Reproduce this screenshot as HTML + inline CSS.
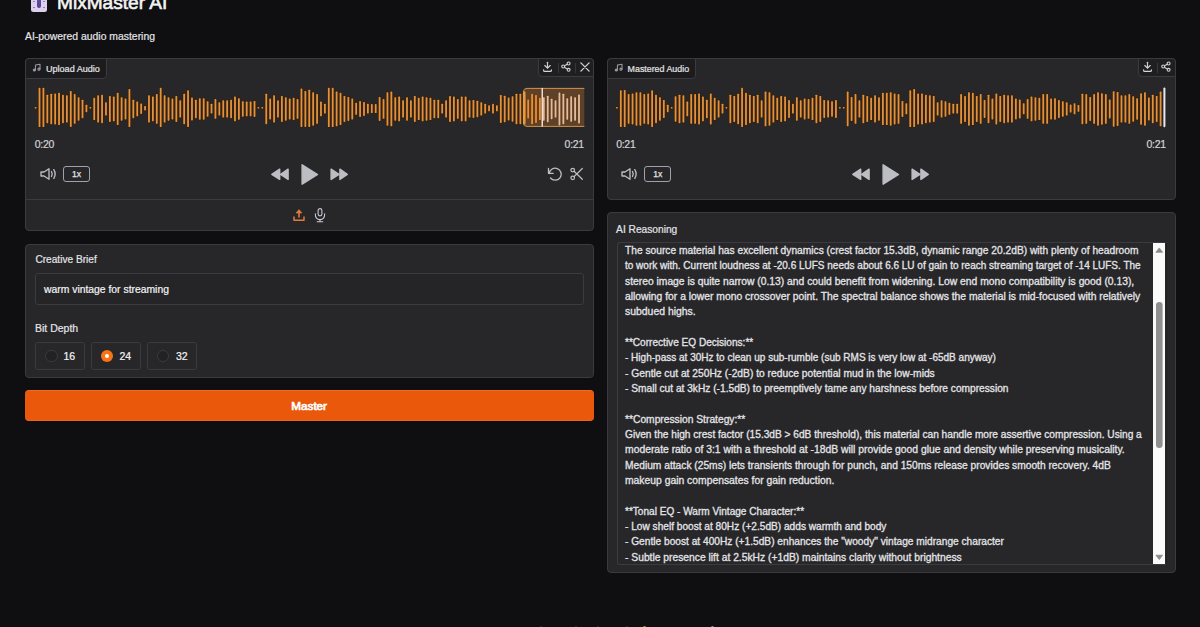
<!DOCTYPE html>
<html><head><meta charset="utf-8"><style>
html,body{margin:0;padding:0}
body{width:1200px;height:627px;background:#0f0f11;overflow:hidden;position:relative;font-family:"Liberation Sans",sans-serif;color:#e4e4e7;-webkit-text-stroke:0.2px currentColor}
.a{position:absolute}
.panel{position:absolute;background:#27272a;border:1px solid #3a3a40;border-radius:4px;box-sizing:border-box}
.lbl{position:absolute;left:-1px;top:-1px;height:20.8px;background:#1c1c1f;border:1px solid #3a3a40;border-radius:4px 0 4px 0;box-sizing:border-box}
.lbl span{position:absolute;top:4.8px;font-size:9.05px;line-height:10px;color:#e4e4e7;white-space:nowrap}
.tl{position:absolute;transform-origin:0 0;-webkit-text-stroke:0.3px #e4e4e7;left:625.4px;font-size:10.17px;line-height:12px;white-space:pre;color:#e4e4e7}
.t{position:absolute;white-space:nowrap;line-height:1}
</style></head><body>

<!-- header -->
<div class="a" style="left:31px;top:-5px;width:16px;height:16.7px;background:#dcd0ee;border-radius:2.5px"></div>
<div class="a" style="left:36.8px;top:-5px;width:3.8px;height:12.8px;background:linear-gradient(#5a5aa0,#5a3f9a);border-radius:0 0 2px 2px"></div>
<div class="a" style="left:33px;top:0.8px;width:2px;height:1px;background:#8d84a8"></div>
<div class="a" style="left:42.5px;top:0.8px;width:2px;height:1px;background:#8d84a8"></div>
<div class="a" style="left:33px;top:6.8px;width:2px;height:1px;background:#8d84a8"></div>
<div class="a" style="left:42.5px;top:6.8px;width:2px;height:1px;background:#8d84a8"></div>
<div class="t" style="left:57px;top:-6.9px;font-size:19.1px;font-weight:400;color:#f4f4f5;-webkit-text-stroke:0.6px #f4f4f5">MixMaster AI</div>
<div class="t" style="left:25px;top:32.3px;font-size:10.4px;color:#e4e4e7">AI-powered audio mastering</div>

<!-- upload panel -->
<div class="panel" style="left:25px;top:58px;width:569px;height:173px">
  <div class="lbl" style="width:82px"><span style="left:20px">Upload Audio</span></div>
  <div class="a" style="left:511.5px;top:-1px;width:56.5px;height:18.6px;background:#1f1f22;border:1px solid #3a3a40;border-radius:0 4px 0 4px;box-sizing:border-box"></div>
  <div class="a" style="left:531.6px;top:3.5px;width:1.2px;height:10px;background:#36363c"></div>
  <div class="a" style="left:549.3px;top:3.5px;width:1.2px;height:10px;background:#36363c"></div>
  <div class="a" style="left:-1px;top:140.3px;width:569px;height:1px;background:#3a3a40"></div>
</div>
<svg class="a" style="left:31.6px;top:63.3px" width="9.2" height="9.2" viewBox="0 0 24 24" fill="none" stroke="#9a9aa2" stroke-width="2.7" stroke-linecap="round" stroke-linejoin="round"><path d="M9 18V5l12-2v13"/><circle cx="6" cy="18" r="2.6" fill="#9a9aa2"/><circle cx="18" cy="16" r="2.6"/></svg>
<svg class="a" style="left:542px;top:61px" width="12" height="12" viewBox="0 0 12 12" fill="none" stroke="#d4d4d8" stroke-width="1.15" stroke-linecap="round" stroke-linejoin="round"><path d="M5.5 1.3V6.9"/><path d="M2.8 4.5L5.5 7.1L8.2 4.5"/><path d="M1.6 8.7V9.3A1 1 0 0 0 2.6 10.4H8.4A1 1 0 0 0 9.4 9.3V8.7"/></svg>
<svg class="a" style="left:560px;top:61px" width="12" height="12" viewBox="0 0 12 12" fill="none" stroke="#d4d4d8" stroke-width="1.1"><circle cx="8.6" cy="2.5" r="1.45"/><circle cx="3.2" cy="5.5" r="1.45"/><circle cx="8.6" cy="8.8" r="1.45"/><path d="M4.5 4.8L7.3 3.2M4.5 6.2L7.3 8.1"/></svg>
<svg class="a" style="left:580px;top:61.7px" width="10" height="10" viewBox="0 0 10 10" fill="none" stroke="#d4d4d8" stroke-width="1.3" stroke-linecap="round"><path d="M0.9 0.9L9.1 9.1M9.1 0.9L0.9 9.1"/></svg>

<!-- mastered panel -->
<div class="panel" style="left:606.6px;top:58px;width:569px;height:141.5px">
  <div class="lbl" style="width:89px"><span style="left:20px;font-size:8.85px">Mastered Audio</span></div>
  <div class="a" style="left:530.6px;top:-1px;width:38px;height:18.6px;background:#1f1f22;border:1px solid #3a3a40;border-radius:0 4px 0 4px;box-sizing:border-box"></div>
  <div class="a" style="left:549.4px;top:3.5px;width:1.2px;height:10px;background:#36363c"></div>
</div>
<svg class="a" style="left:613.6px;top:63.3px" width="9.2" height="9.2" viewBox="0 0 24 24" fill="none" stroke="#9a9aa2" stroke-width="2.7" stroke-linecap="round" stroke-linejoin="round"><path d="M9 18V5l12-2v13"/><circle cx="6" cy="18" r="2.6" fill="#9a9aa2"/><circle cx="18" cy="16" r="2.6"/></svg>
<svg class="a" style="left:1142px;top:61px" width="12" height="12" viewBox="0 0 12 12" fill="none" stroke="#d4d4d8" stroke-width="1.15" stroke-linecap="round" stroke-linejoin="round"><path d="M5.5 1.3V6.9"/><path d="M2.8 4.5L5.5 7.1L8.2 4.5"/><path d="M1.6 8.7V9.3A1 1 0 0 0 2.6 10.4H8.4A1 1 0 0 0 9.4 9.3V8.7"/></svg>
<svg class="a" style="left:1159.8px;top:61px" width="12" height="12" viewBox="0 0 12 12" fill="none" stroke="#d4d4d8" stroke-width="1.1"><circle cx="8.6" cy="2.5" r="1.45"/><circle cx="3.2" cy="5.5" r="1.45"/><circle cx="8.6" cy="8.8" r="1.45"/><path d="M4.5 4.8L7.3 3.2M4.5 6.2L7.3 8.1"/></svg>

<svg class="a" style="left:0;top:0" width="1200" height="140" viewBox="0 0 1200 140">
<rect x="34.70" y="107.00" width="1.8" height="1.60" rx="0.6" fill="#e3923c" stroke="#3a1f08" stroke-width="1.5" stroke-opacity="0.85" paint-order="stroke"/><rect x="38.61" y="87.85" width="1.8" height="39.25" rx="0.6" fill="#e3923c" stroke="#3a1f08" stroke-width="1.5" stroke-opacity="0.85" paint-order="stroke"/><rect x="42.52" y="87.85" width="1.8" height="39.25" rx="0.6" fill="#e3923c" stroke="#3a1f08" stroke-width="1.5" stroke-opacity="0.85" paint-order="stroke"/><rect x="46.43" y="94.72" width="1.8" height="28.45" rx="0.6" fill="#e3923c" stroke="#3a1f08" stroke-width="1.5" stroke-opacity="0.85" paint-order="stroke"/><rect x="50.34" y="93.72" width="1.8" height="30.45" rx="0.6" fill="#e3923c" stroke="#3a1f08" stroke-width="1.5" stroke-opacity="0.85" paint-order="stroke"/><rect x="54.25" y="93.47" width="1.8" height="30.95" rx="0.6" fill="#e3923c" stroke="#3a1f08" stroke-width="1.5" stroke-opacity="0.85" paint-order="stroke"/><rect x="58.16" y="92.85" width="1.8" height="32.20" rx="0.6" fill="#e3923c" stroke="#3a1f08" stroke-width="1.5" stroke-opacity="0.85" paint-order="stroke"/><rect x="62.07" y="94.72" width="1.8" height="28.45" rx="0.6" fill="#e3923c" stroke="#3a1f08" stroke-width="1.5" stroke-opacity="0.85" paint-order="stroke"/><rect x="65.97" y="95.35" width="1.8" height="27.20" rx="0.6" fill="#e3923c" stroke="#3a1f08" stroke-width="1.5" stroke-opacity="0.85" paint-order="stroke"/><rect x="69.88" y="90.97" width="1.8" height="35.95" rx="0.6" fill="#e3923c" stroke="#3a1f08" stroke-width="1.5" stroke-opacity="0.85" paint-order="stroke"/><rect x="73.79" y="94.10" width="1.8" height="29.70" rx="0.6" fill="#e3923c" stroke="#3a1f08" stroke-width="1.5" stroke-opacity="0.85" paint-order="stroke"/><rect x="77.70" y="97.22" width="1.8" height="23.45" rx="0.6" fill="#e3923c" stroke="#3a1f08" stroke-width="1.5" stroke-opacity="0.85" paint-order="stroke"/><rect x="81.61" y="99.72" width="1.8" height="18.45" rx="0.6" fill="#e3923c" stroke="#3a1f08" stroke-width="1.5" stroke-opacity="0.85" paint-order="stroke"/><rect x="85.52" y="104.72" width="1.8" height="7.44" rx="0.6" fill="#e3923c" stroke="#3a1f08" stroke-width="1.5" stroke-opacity="0.85" paint-order="stroke"/><rect x="89.43" y="107.00" width="1.8" height="1.60" rx="0.6" fill="#e3923c" stroke="#3a1f08" stroke-width="1.5" stroke-opacity="0.85" paint-order="stroke"/><rect x="93.34" y="97.85" width="1.8" height="22.20" rx="0.6" fill="#e3923c" stroke="#3a1f08" stroke-width="1.5" stroke-opacity="0.85" paint-order="stroke"/><rect x="97.25" y="95.35" width="1.8" height="27.20" rx="0.6" fill="#e3923c" stroke="#3a1f08" stroke-width="1.5" stroke-opacity="0.85" paint-order="stroke"/><rect x="101.16" y="94.72" width="1.8" height="28.45" rx="0.6" fill="#e3923c" stroke="#3a1f08" stroke-width="1.5" stroke-opacity="0.85" paint-order="stroke"/><rect x="105.07" y="102.22" width="1.8" height="13.40" rx="0.6" fill="#e3923c" stroke="#3a1f08" stroke-width="1.5" stroke-opacity="0.85" paint-order="stroke"/><rect x="108.98" y="95.97" width="1.8" height="25.95" rx="0.6" fill="#e3923c" stroke="#3a1f08" stroke-width="1.5" stroke-opacity="0.85" paint-order="stroke"/><rect x="112.89" y="96.60" width="1.8" height="24.70" rx="0.6" fill="#e3923c" stroke="#3a1f08" stroke-width="1.5" stroke-opacity="0.85" paint-order="stroke"/><rect x="116.80" y="92.85" width="1.8" height="32.20" rx="0.6" fill="#e3923c" stroke="#3a1f08" stroke-width="1.5" stroke-opacity="0.85" paint-order="stroke"/><rect x="120.71" y="97.22" width="1.8" height="23.45" rx="0.6" fill="#e3923c" stroke="#3a1f08" stroke-width="1.5" stroke-opacity="0.85" paint-order="stroke"/><rect x="124.62" y="98.47" width="1.8" height="20.95" rx="0.6" fill="#e3923c" stroke="#3a1f08" stroke-width="1.5" stroke-opacity="0.85" paint-order="stroke"/><rect x="128.52" y="89.10" width="1.8" height="38.00" rx="0.6" fill="#e3923c" stroke="#3a1f08" stroke-width="1.5" stroke-opacity="0.85" paint-order="stroke"/><rect x="132.43" y="99.72" width="1.8" height="18.45" rx="0.6" fill="#e3923c" stroke="#3a1f08" stroke-width="1.5" stroke-opacity="0.85" paint-order="stroke"/><rect x="136.34" y="101.60" width="1.8" height="14.70" rx="0.6" fill="#e3923c" stroke="#3a1f08" stroke-width="1.5" stroke-opacity="0.85" paint-order="stroke"/><rect x="140.25" y="103.47" width="1.8" height="10.42" rx="0.6" fill="#e3923c" stroke="#3a1f08" stroke-width="1.5" stroke-opacity="0.85" paint-order="stroke"/><rect x="144.16" y="105.97" width="1.8" height="4.46" rx="0.6" fill="#e3923c" stroke="#3a1f08" stroke-width="1.5" stroke-opacity="0.85" paint-order="stroke"/><rect x="148.07" y="95.35" width="1.8" height="27.20" rx="0.6" fill="#e3923c" stroke="#3a1f08" stroke-width="1.5" stroke-opacity="0.85" paint-order="stroke"/><rect x="151.98" y="96.60" width="1.8" height="24.70" rx="0.6" fill="#e3923c" stroke="#3a1f08" stroke-width="1.5" stroke-opacity="0.85" paint-order="stroke"/><rect x="155.89" y="94.10" width="1.8" height="29.70" rx="0.6" fill="#e3923c" stroke="#3a1f08" stroke-width="1.5" stroke-opacity="0.85" paint-order="stroke"/><rect x="159.80" y="87.85" width="1.8" height="39.25" rx="0.6" fill="#e3923c" stroke="#3a1f08" stroke-width="1.5" stroke-opacity="0.85" paint-order="stroke"/><rect x="163.71" y="95.35" width="1.8" height="27.20" rx="0.6" fill="#e3923c" stroke="#3a1f08" stroke-width="1.5" stroke-opacity="0.85" paint-order="stroke"/><rect x="167.62" y="97.22" width="1.8" height="23.45" rx="0.6" fill="#e3923c" stroke="#3a1f08" stroke-width="1.5" stroke-opacity="0.85" paint-order="stroke"/><rect x="171.53" y="98.47" width="1.8" height="20.95" rx="0.6" fill="#e3923c" stroke="#3a1f08" stroke-width="1.5" stroke-opacity="0.85" paint-order="stroke"/><rect x="175.44" y="95.97" width="1.8" height="25.95" rx="0.6" fill="#e3923c" stroke="#3a1f08" stroke-width="1.5" stroke-opacity="0.85" paint-order="stroke"/><rect x="179.35" y="100.35" width="1.8" height="17.20" rx="0.6" fill="#e3923c" stroke="#3a1f08" stroke-width="1.5" stroke-opacity="0.85" paint-order="stroke"/><rect x="183.26" y="93.72" width="1.8" height="30.45" rx="0.6" fill="#e3923c" stroke="#3a1f08" stroke-width="1.5" stroke-opacity="0.85" paint-order="stroke"/><rect x="187.16" y="90.35" width="1.8" height="36.75" rx="0.6" fill="#e3923c" stroke="#3a1f08" stroke-width="1.5" stroke-opacity="0.85" paint-order="stroke"/><rect x="191.07" y="97.47" width="1.8" height="22.95" rx="0.6" fill="#e3923c" stroke="#3a1f08" stroke-width="1.5" stroke-opacity="0.85" paint-order="stroke"/><rect x="194.98" y="99.72" width="1.8" height="18.45" rx="0.6" fill="#e3923c" stroke="#3a1f08" stroke-width="1.5" stroke-opacity="0.85" paint-order="stroke"/><rect x="198.89" y="98.22" width="1.8" height="21.45" rx="0.6" fill="#e3923c" stroke="#3a1f08" stroke-width="1.5" stroke-opacity="0.85" paint-order="stroke"/><rect x="202.80" y="98.22" width="1.8" height="21.45" rx="0.6" fill="#e3923c" stroke="#3a1f08" stroke-width="1.5" stroke-opacity="0.85" paint-order="stroke"/><rect x="206.71" y="101.22" width="1.8" height="15.45" rx="0.6" fill="#e3923c" stroke="#3a1f08" stroke-width="1.5" stroke-opacity="0.85" paint-order="stroke"/><rect x="210.62" y="103.72" width="1.8" height="9.83" rx="0.6" fill="#e3923c" stroke="#3a1f08" stroke-width="1.5" stroke-opacity="0.85" paint-order="stroke"/><rect x="214.53" y="99.10" width="1.8" height="19.70" rx="0.6" fill="#e3923c" stroke="#3a1f08" stroke-width="1.5" stroke-opacity="0.85" paint-order="stroke"/><rect x="218.44" y="102.22" width="1.8" height="13.40" rx="0.6" fill="#e3923c" stroke="#3a1f08" stroke-width="1.5" stroke-opacity="0.85" paint-order="stroke"/><rect x="222.35" y="100.35" width="1.8" height="17.20" rx="0.6" fill="#e3923c" stroke="#3a1f08" stroke-width="1.5" stroke-opacity="0.85" paint-order="stroke"/><rect x="226.26" y="100.35" width="1.8" height="17.20" rx="0.6" fill="#e3923c" stroke="#3a1f08" stroke-width="1.5" stroke-opacity="0.85" paint-order="stroke"/><rect x="230.17" y="99.72" width="1.8" height="18.45" rx="0.6" fill="#e3923c" stroke="#3a1f08" stroke-width="1.5" stroke-opacity="0.85" paint-order="stroke"/><rect x="234.08" y="96.60" width="1.8" height="24.70" rx="0.6" fill="#e3923c" stroke="#3a1f08" stroke-width="1.5" stroke-opacity="0.85" paint-order="stroke"/><rect x="237.99" y="98.22" width="1.8" height="21.45" rx="0.6" fill="#e3923c" stroke="#3a1f08" stroke-width="1.5" stroke-opacity="0.85" paint-order="stroke"/><rect x="241.90" y="101.22" width="1.8" height="15.45" rx="0.6" fill="#e3923c" stroke="#3a1f08" stroke-width="1.5" stroke-opacity="0.85" paint-order="stroke"/><rect x="245.81" y="101.60" width="1.8" height="14.70" rx="0.6" fill="#e3923c" stroke="#3a1f08" stroke-width="1.5" stroke-opacity="0.85" paint-order="stroke"/><rect x="249.71" y="101.60" width="1.8" height="14.70" rx="0.6" fill="#e3923c" stroke="#3a1f08" stroke-width="1.5" stroke-opacity="0.85" paint-order="stroke"/><rect x="253.62" y="100.97" width="1.8" height="15.95" rx="0.6" fill="#e3923c" stroke="#3a1f08" stroke-width="1.5" stroke-opacity="0.85" paint-order="stroke"/><rect x="257.53" y="107.00" width="1.8" height="1.60" rx="0.6" fill="#e3923c" stroke="#3a1f08" stroke-width="1.5" stroke-opacity="0.85" paint-order="stroke"/><rect x="261.44" y="107.00" width="1.8" height="1.60" rx="0.6" fill="#e3923c" stroke="#3a1f08" stroke-width="1.5" stroke-opacity="0.85" paint-order="stroke"/><rect x="265.35" y="93.72" width="1.8" height="30.45" rx="0.6" fill="#e3923c" stroke="#3a1f08" stroke-width="1.5" stroke-opacity="0.85" paint-order="stroke"/><rect x="269.26" y="98.47" width="1.8" height="20.95" rx="0.6" fill="#e3923c" stroke="#3a1f08" stroke-width="1.5" stroke-opacity="0.85" paint-order="stroke"/><rect x="273.17" y="95.35" width="1.8" height="27.20" rx="0.6" fill="#e3923c" stroke="#3a1f08" stroke-width="1.5" stroke-opacity="0.85" paint-order="stroke"/><rect x="277.08" y="100.35" width="1.8" height="17.20" rx="0.6" fill="#e3923c" stroke="#3a1f08" stroke-width="1.5" stroke-opacity="0.85" paint-order="stroke"/><rect x="280.99" y="95.97" width="1.8" height="25.95" rx="0.6" fill="#e3923c" stroke="#3a1f08" stroke-width="1.5" stroke-opacity="0.85" paint-order="stroke"/><rect x="284.90" y="97.22" width="1.8" height="23.45" rx="0.6" fill="#e3923c" stroke="#3a1f08" stroke-width="1.5" stroke-opacity="0.85" paint-order="stroke"/><rect x="288.81" y="98.47" width="1.8" height="20.95" rx="0.6" fill="#e3923c" stroke="#3a1f08" stroke-width="1.5" stroke-opacity="0.85" paint-order="stroke"/><rect x="292.72" y="97.85" width="1.8" height="22.20" rx="0.6" fill="#e3923c" stroke="#3a1f08" stroke-width="1.5" stroke-opacity="0.85" paint-order="stroke"/><rect x="296.63" y="99.10" width="1.8" height="19.70" rx="0.6" fill="#e3923c" stroke="#3a1f08" stroke-width="1.5" stroke-opacity="0.85" paint-order="stroke"/><rect x="300.54" y="88.47" width="1.8" height="38.63" rx="0.6" fill="#e3923c" stroke="#3a1f08" stroke-width="1.5" stroke-opacity="0.85" paint-order="stroke"/><rect x="304.45" y="90.97" width="1.8" height="35.95" rx="0.6" fill="#e3923c" stroke="#3a1f08" stroke-width="1.5" stroke-opacity="0.85" paint-order="stroke"/><rect x="308.35" y="89.72" width="1.8" height="37.38" rx="0.6" fill="#e3923c" stroke="#3a1f08" stroke-width="1.5" stroke-opacity="0.85" paint-order="stroke"/><rect x="312.26" y="92.22" width="1.8" height="33.45" rx="0.6" fill="#e3923c" stroke="#3a1f08" stroke-width="1.5" stroke-opacity="0.85" paint-order="stroke"/><rect x="316.17" y="94.10" width="1.8" height="29.70" rx="0.6" fill="#e3923c" stroke="#3a1f08" stroke-width="1.5" stroke-opacity="0.85" paint-order="stroke"/><rect x="320.08" y="101.60" width="1.8" height="14.70" rx="0.6" fill="#e3923c" stroke="#3a1f08" stroke-width="1.5" stroke-opacity="0.85" paint-order="stroke"/><rect x="323.99" y="103.72" width="1.8" height="9.83" rx="0.6" fill="#e3923c" stroke="#3a1f08" stroke-width="1.5" stroke-opacity="0.85" paint-order="stroke"/><rect x="327.90" y="87.85" width="1.8" height="39.25" rx="0.6" fill="#e3923c" stroke="#3a1f08" stroke-width="1.5" stroke-opacity="0.85" paint-order="stroke"/><rect x="331.81" y="87.85" width="1.8" height="39.25" rx="0.6" fill="#e3923c" stroke="#3a1f08" stroke-width="1.5" stroke-opacity="0.85" paint-order="stroke"/><rect x="335.72" y="91.60" width="1.8" height="34.70" rx="0.6" fill="#e3923c" stroke="#3a1f08" stroke-width="1.5" stroke-opacity="0.85" paint-order="stroke"/><rect x="339.63" y="92.85" width="1.8" height="32.20" rx="0.6" fill="#e3923c" stroke="#3a1f08" stroke-width="1.5" stroke-opacity="0.85" paint-order="stroke"/><rect x="343.54" y="95.97" width="1.8" height="25.95" rx="0.6" fill="#e3923c" stroke="#3a1f08" stroke-width="1.5" stroke-opacity="0.85" paint-order="stroke"/><rect x="347.45" y="96.97" width="1.8" height="23.95" rx="0.6" fill="#e3923c" stroke="#3a1f08" stroke-width="1.5" stroke-opacity="0.85" paint-order="stroke"/><rect x="351.36" y="98.47" width="1.8" height="20.95" rx="0.6" fill="#e3923c" stroke="#3a1f08" stroke-width="1.5" stroke-opacity="0.85" paint-order="stroke"/><rect x="355.27" y="102.85" width="1.8" height="11.91" rx="0.6" fill="#e3923c" stroke="#3a1f08" stroke-width="1.5" stroke-opacity="0.85" paint-order="stroke"/><rect x="359.18" y="100.97" width="1.8" height="15.95" rx="0.6" fill="#e3923c" stroke="#3a1f08" stroke-width="1.5" stroke-opacity="0.85" paint-order="stroke"/><rect x="363.09" y="101.97" width="1.8" height="13.95" rx="0.6" fill="#e3923c" stroke="#3a1f08" stroke-width="1.5" stroke-opacity="0.85" paint-order="stroke"/><rect x="366.99" y="103.72" width="1.8" height="9.83" rx="0.6" fill="#e3923c" stroke="#3a1f08" stroke-width="1.5" stroke-opacity="0.85" paint-order="stroke"/><rect x="370.90" y="104.10" width="1.8" height="8.93" rx="0.6" fill="#e3923c" stroke="#3a1f08" stroke-width="1.5" stroke-opacity="0.85" paint-order="stroke"/><rect x="374.81" y="104.10" width="1.8" height="8.93" rx="0.6" fill="#e3923c" stroke="#3a1f08" stroke-width="1.5" stroke-opacity="0.85" paint-order="stroke"/><rect x="378.72" y="96.97" width="1.8" height="23.95" rx="0.6" fill="#e3923c" stroke="#3a1f08" stroke-width="1.5" stroke-opacity="0.85" paint-order="stroke"/><rect x="382.63" y="99.10" width="1.8" height="19.70" rx="0.6" fill="#e3923c" stroke="#3a1f08" stroke-width="1.5" stroke-opacity="0.85" paint-order="stroke"/><rect x="386.54" y="92.22" width="1.8" height="33.45" rx="0.6" fill="#e3923c" stroke="#3a1f08" stroke-width="1.5" stroke-opacity="0.85" paint-order="stroke"/><rect x="390.45" y="91.60" width="1.8" height="34.70" rx="0.6" fill="#e3923c" stroke="#3a1f08" stroke-width="1.5" stroke-opacity="0.85" paint-order="stroke"/><rect x="394.36" y="97.22" width="1.8" height="23.45" rx="0.6" fill="#e3923c" stroke="#3a1f08" stroke-width="1.5" stroke-opacity="0.85" paint-order="stroke"/><rect x="398.27" y="96.60" width="1.8" height="24.70" rx="0.6" fill="#e3923c" stroke="#3a1f08" stroke-width="1.5" stroke-opacity="0.85" paint-order="stroke"/><rect x="402.18" y="100.35" width="1.8" height="17.20" rx="0.6" fill="#e3923c" stroke="#3a1f08" stroke-width="1.5" stroke-opacity="0.85" paint-order="stroke"/><rect x="406.09" y="97.22" width="1.8" height="23.45" rx="0.6" fill="#e3923c" stroke="#3a1f08" stroke-width="1.5" stroke-opacity="0.85" paint-order="stroke"/><rect x="410.00" y="100.35" width="1.8" height="17.20" rx="0.6" fill="#e3923c" stroke="#3a1f08" stroke-width="1.5" stroke-opacity="0.85" paint-order="stroke"/><rect x="413.91" y="95.97" width="1.8" height="25.95" rx="0.6" fill="#e3923c" stroke="#3a1f08" stroke-width="1.5" stroke-opacity="0.85" paint-order="stroke"/><rect x="417.82" y="97.85" width="1.8" height="22.20" rx="0.6" fill="#e3923c" stroke="#3a1f08" stroke-width="1.5" stroke-opacity="0.85" paint-order="stroke"/><rect x="421.73" y="96.60" width="1.8" height="24.70" rx="0.6" fill="#e3923c" stroke="#3a1f08" stroke-width="1.5" stroke-opacity="0.85" paint-order="stroke"/><rect x="425.64" y="97.22" width="1.8" height="23.45" rx="0.6" fill="#e3923c" stroke="#3a1f08" stroke-width="1.5" stroke-opacity="0.85" paint-order="stroke"/><rect x="429.54" y="97.85" width="1.8" height="22.20" rx="0.6" fill="#e3923c" stroke="#3a1f08" stroke-width="1.5" stroke-opacity="0.85" paint-order="stroke"/><rect x="433.45" y="99.72" width="1.8" height="18.45" rx="0.6" fill="#e3923c" stroke="#3a1f08" stroke-width="1.5" stroke-opacity="0.85" paint-order="stroke"/><rect x="437.36" y="99.72" width="1.8" height="18.45" rx="0.6" fill="#e3923c" stroke="#3a1f08" stroke-width="1.5" stroke-opacity="0.85" paint-order="stroke"/><rect x="441.27" y="103.72" width="1.8" height="9.83" rx="0.6" fill="#e3923c" stroke="#3a1f08" stroke-width="1.5" stroke-opacity="0.85" paint-order="stroke"/><rect x="445.18" y="100.35" width="1.8" height="17.20" rx="0.6" fill="#e3923c" stroke="#3a1f08" stroke-width="1.5" stroke-opacity="0.85" paint-order="stroke"/><rect x="449.09" y="95.97" width="1.8" height="25.95" rx="0.6" fill="#e3923c" stroke="#3a1f08" stroke-width="1.5" stroke-opacity="0.85" paint-order="stroke"/><rect x="453.00" y="96.60" width="1.8" height="24.70" rx="0.6" fill="#e3923c" stroke="#3a1f08" stroke-width="1.5" stroke-opacity="0.85" paint-order="stroke"/><rect x="456.91" y="99.10" width="1.8" height="19.70" rx="0.6" fill="#e3923c" stroke="#3a1f08" stroke-width="1.5" stroke-opacity="0.85" paint-order="stroke"/><rect x="460.82" y="96.60" width="1.8" height="24.70" rx="0.6" fill="#e3923c" stroke="#3a1f08" stroke-width="1.5" stroke-opacity="0.85" paint-order="stroke"/><rect x="464.73" y="96.60" width="1.8" height="24.70" rx="0.6" fill="#e3923c" stroke="#3a1f08" stroke-width="1.5" stroke-opacity="0.85" paint-order="stroke"/><rect x="468.64" y="100.35" width="1.8" height="17.20" rx="0.6" fill="#e3923c" stroke="#3a1f08" stroke-width="1.5" stroke-opacity="0.85" paint-order="stroke"/><rect x="472.55" y="99.97" width="1.8" height="17.95" rx="0.6" fill="#e3923c" stroke="#3a1f08" stroke-width="1.5" stroke-opacity="0.85" paint-order="stroke"/><rect x="476.46" y="100.72" width="1.8" height="16.45" rx="0.6" fill="#e3923c" stroke="#3a1f08" stroke-width="1.5" stroke-opacity="0.85" paint-order="stroke"/><rect x="480.37" y="102.22" width="1.8" height="13.40" rx="0.6" fill="#e3923c" stroke="#3a1f08" stroke-width="1.5" stroke-opacity="0.85" paint-order="stroke"/><rect x="484.28" y="103.72" width="1.8" height="9.83" rx="0.6" fill="#e3923c" stroke="#3a1f08" stroke-width="1.5" stroke-opacity="0.85" paint-order="stroke"/><rect x="488.18" y="105.35" width="1.8" height="5.95" rx="0.6" fill="#e3923c" stroke="#3a1f08" stroke-width="1.5" stroke-opacity="0.85" paint-order="stroke"/><rect x="492.09" y="103.72" width="1.8" height="9.83" rx="0.6" fill="#e3923c" stroke="#3a1f08" stroke-width="1.5" stroke-opacity="0.85" paint-order="stroke"/><rect x="496.00" y="105.35" width="1.8" height="5.95" rx="0.6" fill="#e3923c" stroke="#3a1f08" stroke-width="1.5" stroke-opacity="0.85" paint-order="stroke"/><rect x="499.91" y="94.97" width="1.8" height="27.95" rx="0.6" fill="#e3923c" stroke="#3a1f08" stroke-width="1.5" stroke-opacity="0.85" paint-order="stroke"/><rect x="503.82" y="95.72" width="1.8" height="26.45" rx="0.6" fill="#e3923c" stroke="#3a1f08" stroke-width="1.5" stroke-opacity="0.85" paint-order="stroke"/><rect x="507.73" y="97.47" width="1.8" height="22.95" rx="0.6" fill="#e3923c" stroke="#3a1f08" stroke-width="1.5" stroke-opacity="0.85" paint-order="stroke"/><rect x="511.64" y="96.22" width="1.8" height="25.45" rx="0.6" fill="#e3923c" stroke="#3a1f08" stroke-width="1.5" stroke-opacity="0.85" paint-order="stroke"/><rect x="515.55" y="93.72" width="1.8" height="30.45" rx="0.6" fill="#e3923c" stroke="#3a1f08" stroke-width="1.5" stroke-opacity="0.85" paint-order="stroke"/><rect x="519.46" y="93.72" width="1.8" height="30.45" rx="0.6" fill="#e3923c" stroke="#3a1f08" stroke-width="1.5" stroke-opacity="0.85" paint-order="stroke"/><rect x="523.37" y="94.72" width="1.8" height="28.45" rx="0.6" fill="#e3923c" stroke="#3a1f08" stroke-width="1.5" stroke-opacity="0.85" paint-order="stroke"/><rect x="527.28" y="99.47" width="1.8" height="18.95" rx="0.6" fill="#e3923c" stroke="#3a1f08" stroke-width="1.5" stroke-opacity="0.85" paint-order="stroke"/><rect x="531.19" y="93.72" width="1.8" height="30.45" rx="0.6" fill="#e3923c" stroke="#3a1f08" stroke-width="1.5" stroke-opacity="0.85" paint-order="stroke"/><rect x="535.10" y="94.97" width="1.8" height="27.95" rx="0.6" fill="#e3923c" stroke="#3a1f08" stroke-width="1.5" stroke-opacity="0.85" paint-order="stroke"/><rect x="539.01" y="97.85" width="1.8" height="22.20" rx="0.6" fill="#e3923c" stroke="#3a1f08" stroke-width="1.5" stroke-opacity="0.85" paint-order="stroke"/><rect x="542.92" y="97.22" width="1.8" height="23.45" rx="0.6" fill="#d6d2d2" stroke="#3a1f08" stroke-width="1.5" stroke-opacity="0.85" paint-order="stroke"/><rect x="546.83" y="95.72" width="1.8" height="26.45" rx="0.6" fill="#d6d2d2" stroke="#3a1f08" stroke-width="1.5" stroke-opacity="0.85" paint-order="stroke"/><rect x="550.73" y="98.72" width="1.8" height="20.45" rx="0.6" fill="#d6d2d2" stroke="#3a1f08" stroke-width="1.5" stroke-opacity="0.85" paint-order="stroke"/><rect x="554.64" y="100.35" width="1.8" height="17.20" rx="0.6" fill="#d6d2d2" stroke="#3a1f08" stroke-width="1.5" stroke-opacity="0.85" paint-order="stroke"/><rect x="558.55" y="92.47" width="1.8" height="32.95" rx="0.6" fill="#d6d2d2" stroke="#3a1f08" stroke-width="1.5" stroke-opacity="0.85" paint-order="stroke"/><rect x="562.46" y="93.72" width="1.8" height="30.45" rx="0.6" fill="#d6d2d2" stroke="#3a1f08" stroke-width="1.5" stroke-opacity="0.85" paint-order="stroke"/><rect x="566.37" y="98.22" width="1.8" height="21.45" rx="0.6" fill="#d6d2d2" stroke="#3a1f08" stroke-width="1.5" stroke-opacity="0.85" paint-order="stroke"/><rect x="570.28" y="96.22" width="1.8" height="25.45" rx="0.6" fill="#d6d2d2" stroke="#3a1f08" stroke-width="1.5" stroke-opacity="0.85" paint-order="stroke"/><rect x="574.19" y="97.22" width="1.8" height="23.45" rx="0.6" fill="#d6d2d2" stroke="#3a1f08" stroke-width="1.5" stroke-opacity="0.85" paint-order="stroke"/><rect x="578.10" y="94.47" width="1.8" height="28.95" rx="0.6" fill="#d6d2d2" stroke="#3a1f08" stroke-width="1.5" stroke-opacity="0.85" paint-order="stroke"/>
<rect x="525" y="87.9" width="59.3" height="38.6" fill="rgba(240,135,45,0.27)"/>
<path d="M584.3 88.4H527A3.6 3.6 0 0 0 523.4 92V122.8A3.6 3.6 0 0 0 527 126.4H584.3" fill="none" stroke="#d09048" stroke-width="1"/>
<rect x="523" y="91.3" width="2.5" height="33.3" rx="1.2" fill="#e99a3a"/>
<rect x="541.5" y="87.9" width="1.5" height="38.8" fill="#f0dcc8"/>
<rect x="616.00" y="107.00" width="1.8" height="1.60" rx="0.6" fill="#e3923c" stroke="#3a1f08" stroke-width="1.5" stroke-opacity="0.85" paint-order="stroke"/><rect x="619.91" y="90.35" width="1.8" height="36.75" rx="0.6" fill="#e3923c" stroke="#3a1f08" stroke-width="1.5" stroke-opacity="0.85" paint-order="stroke"/><rect x="623.82" y="89.97" width="1.8" height="37.13" rx="0.6" fill="#e3923c" stroke="#3a1f08" stroke-width="1.5" stroke-opacity="0.85" paint-order="stroke"/><rect x="627.73" y="94.10" width="1.8" height="29.70" rx="0.6" fill="#e3923c" stroke="#3a1f08" stroke-width="1.5" stroke-opacity="0.85" paint-order="stroke"/><rect x="631.65" y="93.47" width="1.8" height="30.95" rx="0.6" fill="#e3923c" stroke="#3a1f08" stroke-width="1.5" stroke-opacity="0.85" paint-order="stroke"/><rect x="635.56" y="92.22" width="1.8" height="33.45" rx="0.6" fill="#e3923c" stroke="#3a1f08" stroke-width="1.5" stroke-opacity="0.85" paint-order="stroke"/><rect x="639.47" y="92.22" width="1.8" height="33.45" rx="0.6" fill="#e3923c" stroke="#3a1f08" stroke-width="1.5" stroke-opacity="0.85" paint-order="stroke"/><rect x="643.38" y="94.10" width="1.8" height="29.70" rx="0.6" fill="#e3923c" stroke="#3a1f08" stroke-width="1.5" stroke-opacity="0.85" paint-order="stroke"/><rect x="647.29" y="93.47" width="1.8" height="30.95" rx="0.6" fill="#e3923c" stroke="#3a1f08" stroke-width="1.5" stroke-opacity="0.85" paint-order="stroke"/><rect x="651.20" y="90.35" width="1.8" height="36.75" rx="0.6" fill="#e3923c" stroke="#3a1f08" stroke-width="1.5" stroke-opacity="0.85" paint-order="stroke"/><rect x="655.12" y="94.72" width="1.8" height="28.45" rx="0.6" fill="#e3923c" stroke="#3a1f08" stroke-width="1.5" stroke-opacity="0.85" paint-order="stroke"/><rect x="659.03" y="97.22" width="1.8" height="23.45" rx="0.6" fill="#e3923c" stroke="#3a1f08" stroke-width="1.5" stroke-opacity="0.85" paint-order="stroke"/><rect x="662.94" y="99.97" width="1.8" height="17.95" rx="0.6" fill="#e3923c" stroke="#3a1f08" stroke-width="1.5" stroke-opacity="0.85" paint-order="stroke"/><rect x="666.85" y="104.72" width="1.8" height="7.44" rx="0.6" fill="#e3923c" stroke="#3a1f08" stroke-width="1.5" stroke-opacity="0.85" paint-order="stroke"/><rect x="670.76" y="107.00" width="1.8" height="1.60" rx="0.6" fill="#e3923c" stroke="#3a1f08" stroke-width="1.5" stroke-opacity="0.85" paint-order="stroke"/><rect x="674.67" y="96.22" width="1.8" height="25.45" rx="0.6" fill="#e3923c" stroke="#3a1f08" stroke-width="1.5" stroke-opacity="0.85" paint-order="stroke"/><rect x="678.58" y="94.72" width="1.8" height="28.45" rx="0.6" fill="#e3923c" stroke="#3a1f08" stroke-width="1.5" stroke-opacity="0.85" paint-order="stroke"/><rect x="682.50" y="95.35" width="1.8" height="27.20" rx="0.6" fill="#e3923c" stroke="#3a1f08" stroke-width="1.5" stroke-opacity="0.85" paint-order="stroke"/><rect x="686.41" y="101.60" width="1.8" height="14.70" rx="0.6" fill="#e3923c" stroke="#3a1f08" stroke-width="1.5" stroke-opacity="0.85" paint-order="stroke"/><rect x="690.32" y="94.10" width="1.8" height="29.70" rx="0.6" fill="#e3923c" stroke="#3a1f08" stroke-width="1.5" stroke-opacity="0.85" paint-order="stroke"/><rect x="694.23" y="94.10" width="1.8" height="29.70" rx="0.6" fill="#e3923c" stroke="#3a1f08" stroke-width="1.5" stroke-opacity="0.85" paint-order="stroke"/><rect x="698.14" y="93.47" width="1.8" height="30.95" rx="0.6" fill="#e3923c" stroke="#3a1f08" stroke-width="1.5" stroke-opacity="0.85" paint-order="stroke"/><rect x="702.05" y="96.60" width="1.8" height="24.70" rx="0.6" fill="#e3923c" stroke="#3a1f08" stroke-width="1.5" stroke-opacity="0.85" paint-order="stroke"/><rect x="705.96" y="99.72" width="1.8" height="18.45" rx="0.6" fill="#e3923c" stroke="#3a1f08" stroke-width="1.5" stroke-opacity="0.85" paint-order="stroke"/><rect x="709.88" y="93.47" width="1.8" height="30.95" rx="0.6" fill="#e3923c" stroke="#3a1f08" stroke-width="1.5" stroke-opacity="0.85" paint-order="stroke"/><rect x="713.79" y="97.85" width="1.8" height="22.20" rx="0.6" fill="#e3923c" stroke="#3a1f08" stroke-width="1.5" stroke-opacity="0.85" paint-order="stroke"/><rect x="717.70" y="100.35" width="1.8" height="17.20" rx="0.6" fill="#e3923c" stroke="#3a1f08" stroke-width="1.5" stroke-opacity="0.85" paint-order="stroke"/><rect x="721.61" y="103.72" width="1.8" height="9.83" rx="0.6" fill="#e3923c" stroke="#3a1f08" stroke-width="1.5" stroke-opacity="0.85" paint-order="stroke"/><rect x="725.52" y="107.00" width="1.8" height="1.60" rx="0.6" fill="#e3923c" stroke="#3a1f08" stroke-width="1.5" stroke-opacity="0.85" paint-order="stroke"/><rect x="729.43" y="94.72" width="1.8" height="28.45" rx="0.6" fill="#e3923c" stroke="#3a1f08" stroke-width="1.5" stroke-opacity="0.85" paint-order="stroke"/><rect x="733.35" y="95.97" width="1.8" height="25.95" rx="0.6" fill="#e3923c" stroke="#3a1f08" stroke-width="1.5" stroke-opacity="0.85" paint-order="stroke"/><rect x="737.26" y="93.72" width="1.8" height="30.45" rx="0.6" fill="#e3923c" stroke="#3a1f08" stroke-width="1.5" stroke-opacity="0.85" paint-order="stroke"/><rect x="741.17" y="87.85" width="1.8" height="39.25" rx="0.6" fill="#e3923c" stroke="#3a1f08" stroke-width="1.5" stroke-opacity="0.85" paint-order="stroke"/><rect x="745.08" y="92.85" width="1.8" height="32.20" rx="0.6" fill="#e3923c" stroke="#3a1f08" stroke-width="1.5" stroke-opacity="0.85" paint-order="stroke"/><rect x="748.99" y="94.72" width="1.8" height="28.45" rx="0.6" fill="#e3923c" stroke="#3a1f08" stroke-width="1.5" stroke-opacity="0.85" paint-order="stroke"/><rect x="752.90" y="95.97" width="1.8" height="25.95" rx="0.6" fill="#e3923c" stroke="#3a1f08" stroke-width="1.5" stroke-opacity="0.85" paint-order="stroke"/><rect x="756.81" y="94.72" width="1.8" height="28.45" rx="0.6" fill="#e3923c" stroke="#3a1f08" stroke-width="1.5" stroke-opacity="0.85" paint-order="stroke"/><rect x="760.73" y="100.35" width="1.8" height="17.20" rx="0.6" fill="#e3923c" stroke="#3a1f08" stroke-width="1.5" stroke-opacity="0.85" paint-order="stroke"/><rect x="764.64" y="91.60" width="1.8" height="34.70" rx="0.6" fill="#e3923c" stroke="#3a1f08" stroke-width="1.5" stroke-opacity="0.85" paint-order="stroke"/><rect x="768.55" y="92.22" width="1.8" height="33.45" rx="0.6" fill="#e3923c" stroke="#3a1f08" stroke-width="1.5" stroke-opacity="0.85" paint-order="stroke"/><rect x="772.46" y="95.35" width="1.8" height="27.20" rx="0.6" fill="#e3923c" stroke="#3a1f08" stroke-width="1.5" stroke-opacity="0.85" paint-order="stroke"/><rect x="776.37" y="97.85" width="1.8" height="22.20" rx="0.6" fill="#e3923c" stroke="#3a1f08" stroke-width="1.5" stroke-opacity="0.85" paint-order="stroke"/><rect x="780.28" y="95.97" width="1.8" height="25.95" rx="0.6" fill="#e3923c" stroke="#3a1f08" stroke-width="1.5" stroke-opacity="0.85" paint-order="stroke"/><rect x="784.19" y="96.60" width="1.8" height="24.70" rx="0.6" fill="#e3923c" stroke="#3a1f08" stroke-width="1.5" stroke-opacity="0.85" paint-order="stroke"/><rect x="788.11" y="99.97" width="1.8" height="17.95" rx="0.6" fill="#e3923c" stroke="#3a1f08" stroke-width="1.5" stroke-opacity="0.85" paint-order="stroke"/><rect x="792.02" y="103.72" width="1.8" height="9.83" rx="0.6" fill="#e3923c" stroke="#3a1f08" stroke-width="1.5" stroke-opacity="0.85" paint-order="stroke"/><rect x="795.93" y="97.22" width="1.8" height="23.45" rx="0.6" fill="#e3923c" stroke="#3a1f08" stroke-width="1.5" stroke-opacity="0.85" paint-order="stroke"/><rect x="799.84" y="100.35" width="1.8" height="17.20" rx="0.6" fill="#e3923c" stroke="#3a1f08" stroke-width="1.5" stroke-opacity="0.85" paint-order="stroke"/><rect x="803.75" y="98.47" width="1.8" height="20.95" rx="0.6" fill="#e3923c" stroke="#3a1f08" stroke-width="1.5" stroke-opacity="0.85" paint-order="stroke"/><rect x="807.66" y="99.10" width="1.8" height="19.70" rx="0.6" fill="#e3923c" stroke="#3a1f08" stroke-width="1.5" stroke-opacity="0.85" paint-order="stroke"/><rect x="811.58" y="97.85" width="1.8" height="22.20" rx="0.6" fill="#e3923c" stroke="#3a1f08" stroke-width="1.5" stroke-opacity="0.85" paint-order="stroke"/><rect x="815.49" y="94.72" width="1.8" height="28.45" rx="0.6" fill="#e3923c" stroke="#3a1f08" stroke-width="1.5" stroke-opacity="0.85" paint-order="stroke"/><rect x="819.40" y="95.97" width="1.8" height="25.95" rx="0.6" fill="#e3923c" stroke="#3a1f08" stroke-width="1.5" stroke-opacity="0.85" paint-order="stroke"/><rect x="823.31" y="99.97" width="1.8" height="17.95" rx="0.6" fill="#e3923c" stroke="#3a1f08" stroke-width="1.5" stroke-opacity="0.85" paint-order="stroke"/><rect x="827.22" y="100.35" width="1.8" height="17.20" rx="0.6" fill="#e3923c" stroke="#3a1f08" stroke-width="1.5" stroke-opacity="0.85" paint-order="stroke"/><rect x="831.13" y="101.22" width="1.8" height="15.45" rx="0.6" fill="#e3923c" stroke="#3a1f08" stroke-width="1.5" stroke-opacity="0.85" paint-order="stroke"/><rect x="835.04" y="99.97" width="1.8" height="17.95" rx="0.6" fill="#e3923c" stroke="#3a1f08" stroke-width="1.5" stroke-opacity="0.85" paint-order="stroke"/><rect x="838.96" y="107.00" width="1.8" height="1.60" rx="0.6" fill="#e3923c" stroke="#3a1f08" stroke-width="1.5" stroke-opacity="0.85" paint-order="stroke"/><rect x="842.87" y="107.00" width="1.8" height="1.60" rx="0.6" fill="#e3923c" stroke="#3a1f08" stroke-width="1.5" stroke-opacity="0.85" paint-order="stroke"/><rect x="846.78" y="91.60" width="1.8" height="34.70" rx="0.6" fill="#e3923c" stroke="#3a1f08" stroke-width="1.5" stroke-opacity="0.85" paint-order="stroke"/><rect x="850.69" y="96.97" width="1.8" height="23.95" rx="0.6" fill="#e3923c" stroke="#3a1f08" stroke-width="1.5" stroke-opacity="0.85" paint-order="stroke"/><rect x="854.60" y="94.10" width="1.8" height="29.70" rx="0.6" fill="#e3923c" stroke="#3a1f08" stroke-width="1.5" stroke-opacity="0.85" paint-order="stroke"/><rect x="858.51" y="100.35" width="1.8" height="17.20" rx="0.6" fill="#e3923c" stroke="#3a1f08" stroke-width="1.5" stroke-opacity="0.85" paint-order="stroke"/><rect x="862.43" y="94.72" width="1.8" height="28.45" rx="0.6" fill="#e3923c" stroke="#3a1f08" stroke-width="1.5" stroke-opacity="0.85" paint-order="stroke"/><rect x="866.34" y="95.97" width="1.8" height="25.95" rx="0.6" fill="#e3923c" stroke="#3a1f08" stroke-width="1.5" stroke-opacity="0.85" paint-order="stroke"/><rect x="870.25" y="97.85" width="1.8" height="22.20" rx="0.6" fill="#e3923c" stroke="#3a1f08" stroke-width="1.5" stroke-opacity="0.85" paint-order="stroke"/><rect x="874.16" y="95.35" width="1.8" height="27.20" rx="0.6" fill="#e3923c" stroke="#3a1f08" stroke-width="1.5" stroke-opacity="0.85" paint-order="stroke"/><rect x="878.07" y="97.22" width="1.8" height="23.45" rx="0.6" fill="#e3923c" stroke="#3a1f08" stroke-width="1.5" stroke-opacity="0.85" paint-order="stroke"/><rect x="881.98" y="92.85" width="1.8" height="32.20" rx="0.6" fill="#e3923c" stroke="#3a1f08" stroke-width="1.5" stroke-opacity="0.85" paint-order="stroke"/><rect x="885.89" y="92.85" width="1.8" height="32.20" rx="0.6" fill="#e3923c" stroke="#3a1f08" stroke-width="1.5" stroke-opacity="0.85" paint-order="stroke"/><rect x="889.81" y="92.22" width="1.8" height="33.45" rx="0.6" fill="#e3923c" stroke="#3a1f08" stroke-width="1.5" stroke-opacity="0.85" paint-order="stroke"/><rect x="893.72" y="93.47" width="1.8" height="30.95" rx="0.6" fill="#e3923c" stroke="#3a1f08" stroke-width="1.5" stroke-opacity="0.85" paint-order="stroke"/><rect x="897.63" y="94.10" width="1.8" height="29.70" rx="0.6" fill="#e3923c" stroke="#3a1f08" stroke-width="1.5" stroke-opacity="0.85" paint-order="stroke"/><rect x="901.54" y="100.97" width="1.8" height="15.95" rx="0.6" fill="#e3923c" stroke="#3a1f08" stroke-width="1.5" stroke-opacity="0.85" paint-order="stroke"/><rect x="905.45" y="103.22" width="1.8" height="11.02" rx="0.6" fill="#e3923c" stroke="#3a1f08" stroke-width="1.5" stroke-opacity="0.85" paint-order="stroke"/><rect x="909.36" y="90.35" width="1.8" height="36.75" rx="0.6" fill="#e3923c" stroke="#3a1f08" stroke-width="1.5" stroke-opacity="0.85" paint-order="stroke"/><rect x="913.27" y="89.10" width="1.8" height="38.00" rx="0.6" fill="#e3923c" stroke="#3a1f08" stroke-width="1.5" stroke-opacity="0.85" paint-order="stroke"/><rect x="917.19" y="93.47" width="1.8" height="30.95" rx="0.6" fill="#e3923c" stroke="#3a1f08" stroke-width="1.5" stroke-opacity="0.85" paint-order="stroke"/><rect x="921.10" y="93.47" width="1.8" height="30.95" rx="0.6" fill="#e3923c" stroke="#3a1f08" stroke-width="1.5" stroke-opacity="0.85" paint-order="stroke"/><rect x="925.01" y="94.72" width="1.8" height="28.45" rx="0.6" fill="#e3923c" stroke="#3a1f08" stroke-width="1.5" stroke-opacity="0.85" paint-order="stroke"/><rect x="928.92" y="95.35" width="1.8" height="27.20" rx="0.6" fill="#e3923c" stroke="#3a1f08" stroke-width="1.5" stroke-opacity="0.85" paint-order="stroke"/><rect x="932.83" y="95.97" width="1.8" height="25.95" rx="0.6" fill="#e3923c" stroke="#3a1f08" stroke-width="1.5" stroke-opacity="0.85" paint-order="stroke"/><rect x="936.74" y="102.22" width="1.8" height="13.40" rx="0.6" fill="#e3923c" stroke="#3a1f08" stroke-width="1.5" stroke-opacity="0.85" paint-order="stroke"/><rect x="940.66" y="100.35" width="1.8" height="17.20" rx="0.6" fill="#e3923c" stroke="#3a1f08" stroke-width="1.5" stroke-opacity="0.85" paint-order="stroke"/><rect x="944.57" y="101.22" width="1.8" height="15.45" rx="0.6" fill="#e3923c" stroke="#3a1f08" stroke-width="1.5" stroke-opacity="0.85" paint-order="stroke"/><rect x="948.48" y="102.85" width="1.8" height="11.91" rx="0.6" fill="#e3923c" stroke="#3a1f08" stroke-width="1.5" stroke-opacity="0.85" paint-order="stroke"/><rect x="952.39" y="103.72" width="1.8" height="9.83" rx="0.6" fill="#e3923c" stroke="#3a1f08" stroke-width="1.5" stroke-opacity="0.85" paint-order="stroke"/><rect x="956.30" y="103.72" width="1.8" height="9.83" rx="0.6" fill="#e3923c" stroke="#3a1f08" stroke-width="1.5" stroke-opacity="0.85" paint-order="stroke"/><rect x="960.21" y="94.10" width="1.8" height="29.70" rx="0.6" fill="#e3923c" stroke="#3a1f08" stroke-width="1.5" stroke-opacity="0.85" paint-order="stroke"/><rect x="964.12" y="95.97" width="1.8" height="25.95" rx="0.6" fill="#e3923c" stroke="#3a1f08" stroke-width="1.5" stroke-opacity="0.85" paint-order="stroke"/><rect x="968.04" y="92.22" width="1.8" height="33.45" rx="0.6" fill="#e3923c" stroke="#3a1f08" stroke-width="1.5" stroke-opacity="0.85" paint-order="stroke"/><rect x="971.95" y="92.85" width="1.8" height="32.20" rx="0.6" fill="#e3923c" stroke="#3a1f08" stroke-width="1.5" stroke-opacity="0.85" paint-order="stroke"/><rect x="975.86" y="95.97" width="1.8" height="25.95" rx="0.6" fill="#e3923c" stroke="#3a1f08" stroke-width="1.5" stroke-opacity="0.85" paint-order="stroke"/><rect x="979.77" y="94.10" width="1.8" height="29.70" rx="0.6" fill="#e3923c" stroke="#3a1f08" stroke-width="1.5" stroke-opacity="0.85" paint-order="stroke"/><rect x="983.68" y="99.97" width="1.8" height="17.95" rx="0.6" fill="#e3923c" stroke="#3a1f08" stroke-width="1.5" stroke-opacity="0.85" paint-order="stroke"/><rect x="987.59" y="94.72" width="1.8" height="28.45" rx="0.6" fill="#e3923c" stroke="#3a1f08" stroke-width="1.5" stroke-opacity="0.85" paint-order="stroke"/><rect x="991.51" y="98.47" width="1.8" height="20.95" rx="0.6" fill="#e3923c" stroke="#3a1f08" stroke-width="1.5" stroke-opacity="0.85" paint-order="stroke"/><rect x="995.42" y="93.47" width="1.8" height="30.95" rx="0.6" fill="#e3923c" stroke="#3a1f08" stroke-width="1.5" stroke-opacity="0.85" paint-order="stroke"/><rect x="999.33" y="95.97" width="1.8" height="25.95" rx="0.6" fill="#e3923c" stroke="#3a1f08" stroke-width="1.5" stroke-opacity="0.85" paint-order="stroke"/><rect x="1003.24" y="94.72" width="1.8" height="28.45" rx="0.6" fill="#e3923c" stroke="#3a1f08" stroke-width="1.5" stroke-opacity="0.85" paint-order="stroke"/><rect x="1007.15" y="95.35" width="1.8" height="27.20" rx="0.6" fill="#e3923c" stroke="#3a1f08" stroke-width="1.5" stroke-opacity="0.85" paint-order="stroke"/><rect x="1011.06" y="95.35" width="1.8" height="27.20" rx="0.6" fill="#e3923c" stroke="#3a1f08" stroke-width="1.5" stroke-opacity="0.85" paint-order="stroke"/><rect x="1014.97" y="98.47" width="1.8" height="20.95" rx="0.6" fill="#e3923c" stroke="#3a1f08" stroke-width="1.5" stroke-opacity="0.85" paint-order="stroke"/><rect x="1018.89" y="99.47" width="1.8" height="18.95" rx="0.6" fill="#e3923c" stroke="#3a1f08" stroke-width="1.5" stroke-opacity="0.85" paint-order="stroke"/><rect x="1022.80" y="103.22" width="1.8" height="11.02" rx="0.6" fill="#e3923c" stroke="#3a1f08" stroke-width="1.5" stroke-opacity="0.85" paint-order="stroke"/><rect x="1026.71" y="99.10" width="1.8" height="19.70" rx="0.6" fill="#e3923c" stroke="#3a1f08" stroke-width="1.5" stroke-opacity="0.85" paint-order="stroke"/><rect x="1030.62" y="96.60" width="1.8" height="24.70" rx="0.6" fill="#e3923c" stroke="#3a1f08" stroke-width="1.5" stroke-opacity="0.85" paint-order="stroke"/><rect x="1034.53" y="97.22" width="1.8" height="23.45" rx="0.6" fill="#e3923c" stroke="#3a1f08" stroke-width="1.5" stroke-opacity="0.85" paint-order="stroke"/><rect x="1038.44" y="97.85" width="1.8" height="22.20" rx="0.6" fill="#e3923c" stroke="#3a1f08" stroke-width="1.5" stroke-opacity="0.85" paint-order="stroke"/><rect x="1042.35" y="94.10" width="1.8" height="29.70" rx="0.6" fill="#e3923c" stroke="#3a1f08" stroke-width="1.5" stroke-opacity="0.85" paint-order="stroke"/><rect x="1046.27" y="94.10" width="1.8" height="29.70" rx="0.6" fill="#e3923c" stroke="#3a1f08" stroke-width="1.5" stroke-opacity="0.85" paint-order="stroke"/><rect x="1050.18" y="98.47" width="1.8" height="20.95" rx="0.6" fill="#e3923c" stroke="#3a1f08" stroke-width="1.5" stroke-opacity="0.85" paint-order="stroke"/><rect x="1054.09" y="98.22" width="1.8" height="21.45" rx="0.6" fill="#e3923c" stroke="#3a1f08" stroke-width="1.5" stroke-opacity="0.85" paint-order="stroke"/><rect x="1058.00" y="99.97" width="1.8" height="17.95" rx="0.6" fill="#e3923c" stroke="#3a1f08" stroke-width="1.5" stroke-opacity="0.85" paint-order="stroke"/><rect x="1061.91" y="101.22" width="1.8" height="15.45" rx="0.6" fill="#e3923c" stroke="#3a1f08" stroke-width="1.5" stroke-opacity="0.85" paint-order="stroke"/><rect x="1065.82" y="102.22" width="1.8" height="13.40" rx="0.6" fill="#e3923c" stroke="#3a1f08" stroke-width="1.5" stroke-opacity="0.85" paint-order="stroke"/><rect x="1069.74" y="104.47" width="1.8" height="8.04" rx="0.6" fill="#e3923c" stroke="#3a1f08" stroke-width="1.5" stroke-opacity="0.85" paint-order="stroke"/><rect x="1073.65" y="103.22" width="1.8" height="11.02" rx="0.6" fill="#e3923c" stroke="#3a1f08" stroke-width="1.5" stroke-opacity="0.85" paint-order="stroke"/><rect x="1077.56" y="104.97" width="1.8" height="6.85" rx="0.6" fill="#e3923c" stroke="#3a1f08" stroke-width="1.5" stroke-opacity="0.85" paint-order="stroke"/><rect x="1081.47" y="93.72" width="1.8" height="30.45" rx="0.6" fill="#e3923c" stroke="#3a1f08" stroke-width="1.5" stroke-opacity="0.85" paint-order="stroke"/><rect x="1085.38" y="94.10" width="1.8" height="29.70" rx="0.6" fill="#e3923c" stroke="#3a1f08" stroke-width="1.5" stroke-opacity="0.85" paint-order="stroke"/><rect x="1089.29" y="96.97" width="1.8" height="23.95" rx="0.6" fill="#e3923c" stroke="#3a1f08" stroke-width="1.5" stroke-opacity="0.85" paint-order="stroke"/><rect x="1093.20" y="94.10" width="1.8" height="29.70" rx="0.6" fill="#e3923c" stroke="#3a1f08" stroke-width="1.5" stroke-opacity="0.85" paint-order="stroke"/><rect x="1097.12" y="92.22" width="1.8" height="33.45" rx="0.6" fill="#e3923c" stroke="#3a1f08" stroke-width="1.5" stroke-opacity="0.85" paint-order="stroke"/><rect x="1101.03" y="93.22" width="1.8" height="31.45" rx="0.6" fill="#e3923c" stroke="#3a1f08" stroke-width="1.5" stroke-opacity="0.85" paint-order="stroke"/><rect x="1104.94" y="94.10" width="1.8" height="29.70" rx="0.6" fill="#e3923c" stroke="#3a1f08" stroke-width="1.5" stroke-opacity="0.85" paint-order="stroke"/><rect x="1108.85" y="99.47" width="1.8" height="18.95" rx="0.6" fill="#e3923c" stroke="#3a1f08" stroke-width="1.5" stroke-opacity="0.85" paint-order="stroke"/><rect x="1112.76" y="91.22" width="1.8" height="35.45" rx="0.6" fill="#e3923c" stroke="#3a1f08" stroke-width="1.5" stroke-opacity="0.85" paint-order="stroke"/><rect x="1116.67" y="91.97" width="1.8" height="33.95" rx="0.6" fill="#e3923c" stroke="#3a1f08" stroke-width="1.5" stroke-opacity="0.85" paint-order="stroke"/><rect x="1120.58" y="95.35" width="1.8" height="27.20" rx="0.6" fill="#e3923c" stroke="#3a1f08" stroke-width="1.5" stroke-opacity="0.85" paint-order="stroke"/><rect x="1124.50" y="95.35" width="1.8" height="27.20" rx="0.6" fill="#e3923c" stroke="#3a1f08" stroke-width="1.5" stroke-opacity="0.85" paint-order="stroke"/><rect x="1128.41" y="94.10" width="1.8" height="29.70" rx="0.6" fill="#e3923c" stroke="#3a1f08" stroke-width="1.5" stroke-opacity="0.85" paint-order="stroke"/><rect x="1132.32" y="96.22" width="1.8" height="25.45" rx="0.6" fill="#e3923c" stroke="#3a1f08" stroke-width="1.5" stroke-opacity="0.85" paint-order="stroke"/><rect x="1136.23" y="98.22" width="1.8" height="21.45" rx="0.6" fill="#e3923c" stroke="#3a1f08" stroke-width="1.5" stroke-opacity="0.85" paint-order="stroke"/><rect x="1140.14" y="93.22" width="1.8" height="31.45" rx="0.6" fill="#e3923c" stroke="#3a1f08" stroke-width="1.5" stroke-opacity="0.85" paint-order="stroke"/><rect x="1144.05" y="92.22" width="1.8" height="33.45" rx="0.6" fill="#e3923c" stroke="#3a1f08" stroke-width="1.5" stroke-opacity="0.85" paint-order="stroke"/><rect x="1147.97" y="97.47" width="1.8" height="22.95" rx="0.6" fill="#e3923c" stroke="#3a1f08" stroke-width="1.5" stroke-opacity="0.85" paint-order="stroke"/><rect x="1151.88" y="94.72" width="1.8" height="28.45" rx="0.6" fill="#e3923c" stroke="#3a1f08" stroke-width="1.5" stroke-opacity="0.85" paint-order="stroke"/><rect x="1155.79" y="95.97" width="1.8" height="25.95" rx="0.6" fill="#e3923c" stroke="#3a1f08" stroke-width="1.5" stroke-opacity="0.85" paint-order="stroke"/><rect x="1159.70" y="91.60" width="1.8" height="34.70" rx="0.6" fill="#e3923c" stroke="#3a1f08" stroke-width="1.5" stroke-opacity="0.85" paint-order="stroke"/>
<rect x="1163.4" y="87.6" width="2" height="39.6" rx="1" fill="#e8e8f0"/>
</svg>

<div class="t" style="left:34.8px;top:138.8px;font-size:10.5px;letter-spacing:-0.3px;color:#d4d4d8">0:20</div>
<div class="t" style="left:564.6px;top:138.8px;font-size:10.5px;letter-spacing:-0.3px;color:#d4d4d8">0:21</div>
<div class="t" style="left:616.2px;top:138.8px;font-size:10.5px;letter-spacing:-0.3px;color:#d4d4d8">0:21</div>
<div class="t" style="left:1146.5px;top:138.8px;font-size:10.5px;letter-spacing:-0.3px;color:#d4d4d8">0:21</div>

<svg style="position:absolute;left:39.5px;top:168px" width="17" height="12" viewBox="0 0 17 12" fill="none" stroke="#bdbdc4" stroke-width="1.35" stroke-linejoin="round" stroke-linecap="round"><path d="M1 4H4L9 0.8V11.2L4 8H1Z"/><path d="M11.5 3.5Q13 6 11.5 8.5"/><path d="M13.8 1.6Q16.5 6 13.8 10.4"/></svg>
<div style="position:absolute;left:63px;top:166px;width:25px;height:14px;border:1px solid #a1a1aa;border-radius:3px;box-sizing:content-box"><div style="position:absolute;left:0;right:0;top:2.3px;text-align:center;font-size:8.6px;line-height:10px;color:#e4e4e7;-webkit-text-stroke:0.25px #e4e4e7">1x</div></div>
<svg style="position:absolute;left:270.5px;top:164px" width="78" height="22" viewBox="0 0 78 22" fill="#bdbdc4" stroke="#bdbdc4" stroke-width="1.4" stroke-linejoin="round">
<path d="M0.8 10.3L8.7 5.2V15.4Z"/><path d="M9.6 10.3L17.1 5.2V15.4Z"/>
<path d="M31.1 0.8L46.6 10.5L31.1 20.2Z"/>
<path d="M60.1 5.2L68 10.3L60.1 15.4Z"/><path d="M68.9 5.2L76.3 10.3L68.9 15.4Z"/>
</svg>
<svg style="position:absolute;left:547px;top:167px" width="16" height="15" viewBox="0 0 16 15" fill="none" stroke="#bdbdc4" stroke-width="1.3" stroke-linecap="round" stroke-linejoin="round"><path d="M2.2 6.5A6 6 0 1 1 3.5 11"/><path d="M1.5 1.5V6.3H6.2"/></svg>
<svg style="position:absolute;left:568.5px;top:167px" width="15" height="15" viewBox="0 0 15 15" fill="none" stroke="#bdbdc4" stroke-width="1.25" stroke-linecap="round"><circle cx="3.7" cy="3.1" r="1.8"/><circle cx="3.7" cy="10.8" r="1.8"/><path d="M5.1 4.3L13.3 12.3"/><path d="M13.3 1.5L5.1 9.6"/></svg>
<svg style="position:absolute;left:292px;top:208px" width="14" height="14" viewBox="0 0 14 14" fill="none" stroke="#e07a3c" stroke-width="1.5" stroke-linejoin="round"><path d="M2 8.6V12.2H12V8.6"/><path d="M7 1.6L10 5H4Z" fill="#e07a3c" stroke-width="0.6"/><path d="M7 4.5V9.4" stroke-width="1.6"/></svg>
<svg style="position:absolute;left:314px;top:207px" width="12" height="16" viewBox="0 0 12 16" fill="none" stroke="#c8c8d0" stroke-width="1.1" stroke-linecap="round"><rect x="4.1" y="1.6" width="3.8" height="7.3" rx="1.9"/><path d="M1.3 6.8Q1.3 12.6 6 12.6Q10.7 12.6 10.7 6.8"/><path d="M6 12.6V14.6"/><path d="M3.2 14.8H8.8"/></svg>

<svg style="position:absolute;left:620.8px;top:168px" width="17" height="12" viewBox="0 0 17 12" fill="none" stroke="#bdbdc4" stroke-width="1.35" stroke-linejoin="round" stroke-linecap="round"><path d="M1 4H4L9 0.8V11.2L4 8H1Z"/><path d="M11.5 3.5Q13 6 11.5 8.5"/><path d="M13.8 1.6Q16.5 6 13.8 10.4"/></svg>
<div style="position:absolute;left:644.2px;top:166px;width:25px;height:14px;border:1px solid #a1a1aa;border-radius:3px;box-sizing:content-box"><div style="position:absolute;left:0;right:0;top:2.3px;text-align:center;font-size:8.6px;line-height:10px;color:#e4e4e7;-webkit-text-stroke:0.25px #e4e4e7">1x</div></div>
<svg style="position:absolute;left:852.2px;top:164px" width="78" height="22" viewBox="0 0 78 22" fill="#bdbdc4" stroke="#bdbdc4" stroke-width="1.4" stroke-linejoin="round">
<path d="M0.8 10.3L8.7 5.2V15.4Z"/><path d="M9.6 10.3L17.1 5.2V15.4Z"/>
<path d="M31.1 0.8L46.6 10.5L31.1 20.2Z"/>
<path d="M60.1 5.2L68 10.3L60.1 15.4Z"/><path d="M68.9 5.2L76.3 10.3L68.9 15.4Z"/>
</svg>

<!-- creative brief panel -->
<div class="panel" style="left:25px;top:244px;width:569px;height:133.7px">
  <div class="t" style="left:9.4px;top:9.9px;font-size:10.13px">Creative Brief</div>
  <div class="a" style="left:9.4px;top:28.4px;width:548.8px;height:31.2px;border:1px solid #3a3a40;border-radius:3px;box-sizing:border-box;background:#252528"></div>
  <div class="t" style="left:18px;top:40.1px;font-size:10.36px;color:#f4f4f5">warm vintage for streaming</div>
  <div class="t" style="left:9px;top:77.8px;font-size:10.5px">Bit Depth</div>
  <div class="a" style="left:9px;top:97.3px;width:50px;height:27.5px;border:1px solid #3a3a40;border-radius:3px;box-sizing:border-box"></div>
  <div class="a" style="left:64.7px;top:97.3px;width:50.5px;height:27.5px;border:1px solid #3a3a40;border-radius:3px;box-sizing:border-box"></div>
  <div class="a" style="left:121.2px;top:97.3px;width:49.5px;height:27.5px;border:1px solid #3a3a40;border-radius:3px;box-sizing:border-box"></div>
  <div class="a" style="left:19px;top:104.8px;width:12.5px;height:12.5px;border:1px solid #3a3a40;border-radius:50%;box-sizing:border-box;background:#222225"></div>
  <div class="a" style="left:74.6px;top:104.8px;width:12.5px;height:12.5px;border-radius:50%;background:#f97316"></div>
  <div class="a" style="left:78.6px;top:108.8px;width:4.5px;height:4.5px;border-radius:50%;background:#fff"></div>
  <div class="a" style="left:130.8px;top:104.8px;width:12.5px;height:12.5px;border:1px solid #3a3a40;border-radius:50%;box-sizing:border-box;background:#222225"></div>
  <div class="t" style="left:37.5px;top:106px;font-size:10.5px;color:#f4f4f5">16</div>
  <div class="t" style="left:93.5px;top:106px;font-size:10.5px;color:#f4f4f5">24</div>
  <div class="t" style="left:150px;top:106px;font-size:10.5px;color:#f4f4f5">32</div>
</div>

<!-- master button -->
<div class="a" style="left:25px;top:389.7px;width:569px;height:31.6px;background:#ea580c;border-radius:4px;box-sizing:border-box;border-top:1px solid #f06a24;border-bottom:1px solid #ee6420"></div>
<div class="t" style="left:291.3px;top:400px;font-size:11.7px;font-weight:400;color:#fff;-webkit-text-stroke:0.7px #fff">Master</div>

<!-- AI reasoning panel -->
<div class="panel" style="left:606.6px;top:212.2px;width:569px;height:360.5px">
  <div class="t" style="left:8.5px;top:11.5px;font-size:10.2px">AI Reasoning</div>
  <div class="a" style="left:9.1px;top:29.2px;width:550px;height:322.4px;border:1px solid #3a3a40;border-right-color:#202023;border-radius:3px;box-sizing:border-box;overflow:hidden"></div>
</div>
<div class="tl" style="top:244.90px;transform:scaleX(1.0061)">The source material has excellent dynamics (crest factor 15.3dB, dynamic range 20.2dB) with plenty of headroom</div><div class="tl" style="top:260.25px;transform:scaleX(0.9846)">to work with. Current loudness at -20.6 LUFS needs about 6.6 LU of gain to reach streaming target of -14 LUFS. The</div><div class="tl" style="top:275.59px;transform:scaleX(1.0146)">stereo image is quite narrow (0.13) and could benefit from widening. Low end mono compatibility is good (0.13),</div><div class="tl" style="top:290.94px;transform:scaleX(1.0177)">allowing for a lower mono crossover point. The spectral balance shows the material is mid-focused with relatively</div><div class="tl" style="top:306.28px;transform:scaleX(1.0267)">subdued highs.</div><div class="tl" style="top:336.97px;transform:scaleX(0.9922)">**Corrective EQ Decisions:**</div><div class="tl" style="top:352.31px;transform:scaleX(0.9866)">- High-pass at 30Hz to clean up sub-rumble (sub RMS is very low at -65dB anyway)</div><div class="tl" style="top:367.66px;transform:scaleX(1.0105)">- Gentle cut at 250Hz (-2dB) to reduce potential mud in the low-mids</div><div class="tl" style="top:383.00px;transform:scaleX(1.0021)">- Small cut at 3kHz (-1.5dB) to preemptively tame any harshness before compression</div><div class="tl" style="top:413.70px;transform:scaleX(1.0101)">**Compression Strategy:**</div><div class="tl" style="top:429.04px;transform:scaleX(0.9988)">Given the high crest factor (15.3dB &gt; 6dB threshold), this material can handle more assertive compression. Using a</div><div class="tl" style="top:444.38px;transform:scaleX(1.0201)">moderate ratio of 3:1 with a threshold at -18dB will provide good glue and density while preserving musicality.</div><div class="tl" style="top:459.73px;transform:scaleX(1.0069)">Medium attack (25ms) lets transients through for punch, and 150ms release provides smooth recovery. 4dB</div><div class="tl" style="top:475.08px;transform:scaleX(1.0187)">makeup gain compensates for gain reduction.</div><div class="tl" style="top:505.76px;transform:scaleX(0.9916)">**Tonal EQ - Warm Vintage Character:**</div><div class="tl" style="top:521.11px;transform:scaleX(0.9969)">- Low shelf boost at 80Hz (+2.5dB) adds warmth and body</div><div class="tl" style="top:536.46px;transform:scaleX(1.0013)">- Gentle boost at 400Hz (+1.5dB) enhances the &quot;woody&quot; vintage midrange character</div><div class="tl" style="top:551.80px;transform:scaleX(1.0136)">- Subtle presence lift at 2.5kHz (+1dB) maintains clarity without brightness</div>
<div class="a" style="left:1152.8px;top:243px;width:12.4px;height:321px;background:#fafafa"></div>
<svg class="a" style="left:1152.8px;top:243px" width="13" height="321" viewBox="0 0 13 321"><path d="M6.25 4.9L9.6 9.3H2.9Z" fill="#8c8c8c" stroke="#8c8c8c" stroke-width="0.8" stroke-linejoin="round"/><path d="M6.25 316.6L9.6 312.2H2.9Z" fill="#8c8c8c" stroke="#8c8c8c" stroke-width="0.8" stroke-linejoin="round"/><rect x="3" y="59" width="6.6" height="146" rx="3.3" fill="#8f8f8f"/></svg>

<div class="a" style="left:643.2px;top:625.6px;width:3px;height:2px;border-radius:1.5px 1.5px 0 0;background:#c88a2a"></div>
<div class="a" style="left:711.2px;top:625.8px;width:2.6px;height:2px;border-radius:1.3px 1.3px 0 0;background:#8a8a8e"></div>
<div class="a" style="left:540px;top:626.2px;width:2px;height:1px;background:#2a2a2e"></div>
<div class="a" style="left:574.5px;top:626.2px;width:2px;height:1px;background:#2a2a2e"></div>
<div class="a" style="left:597px;top:626.2px;width:2px;height:1px;background:#2a2a2e"></div>
<div class="a" style="left:626px;top:626.2px;width:2px;height:1px;background:#2a2a2e"></div>
</body></html>
